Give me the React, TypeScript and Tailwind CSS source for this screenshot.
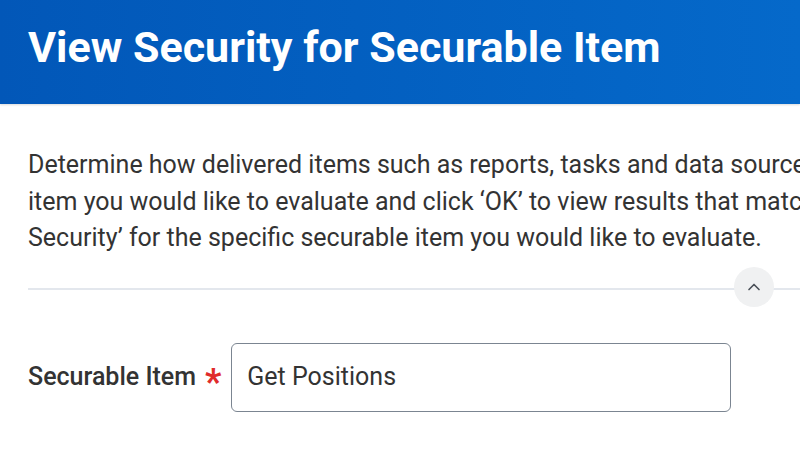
import { ChevronUp } from 'lucide-react';

export default function App() {
  return (
    <div className="w-[800px] h-[465px] overflow-hidden bg-white font-['Roboto',sans-serif] text-[#333333]">
      {/* Header */}
      <div className="h-[104px] bg-gradient-to-r from-[#0257b8] to-[#0569ca] shadow-[0_1px_2px_rgba(0,0,0,0.15)] px-[28px] pt-[21px]">
        <h1 className="text-[43px] leading-[52px] font-bold text-white whitespace-nowrap">
          View Security for Securable Item
        </h1>
      </div>

      <div className="pl-[28px] w-[1100px]">
        {/* Instructions */}
        <div className="pt-[43px] text-[25px] leading-[36.5px] whitespace-nowrap">
          <p>Determine how delivered items such as reports, tasks and data sources are secured. Select the securable</p>
          <p>item you would like to evaluate and click ‘OK’ to view results that match your criteria. Click ‘View</p>
          <p>Security’ for the specific securable item you would like to evaluate.</p>
        </div>

        {/* Divider */}
        <div className="relative mt-[31px] w-[772px]">
          <div className="h-[2px] bg-[#e3e7ed]" />
          <button className="absolute left-[706px] -top-[21px] w-[40px] h-[40px] rounded-full bg-[#f0f1f2] flex items-center justify-center text-[#4a5058]">
            <ChevronUp className="w-[20px] h-[20px]" strokeWidth={2} />
          </button>
        </div>

        {/* Field */}
        <div className="flex items-center mt-[53px]">
          <label className="text-[25px] font-medium text-[#333333] whitespace-nowrap">
            Securable Item
          </label>
          <span className="ml-[9px] mr-[10px] text-[36px] font-bold text-[#e02b2b] leading-none pt-[10px]">*</span>
          <div className="w-[500px] h-[69px] rounded-[6px] border border-[#7b8591] flex items-center px-[15px]">
            <span className="text-[25px] text-[#333333]">Get Positions</span>
          </div>
        </div>
      </div>
    </div>
  );
}
